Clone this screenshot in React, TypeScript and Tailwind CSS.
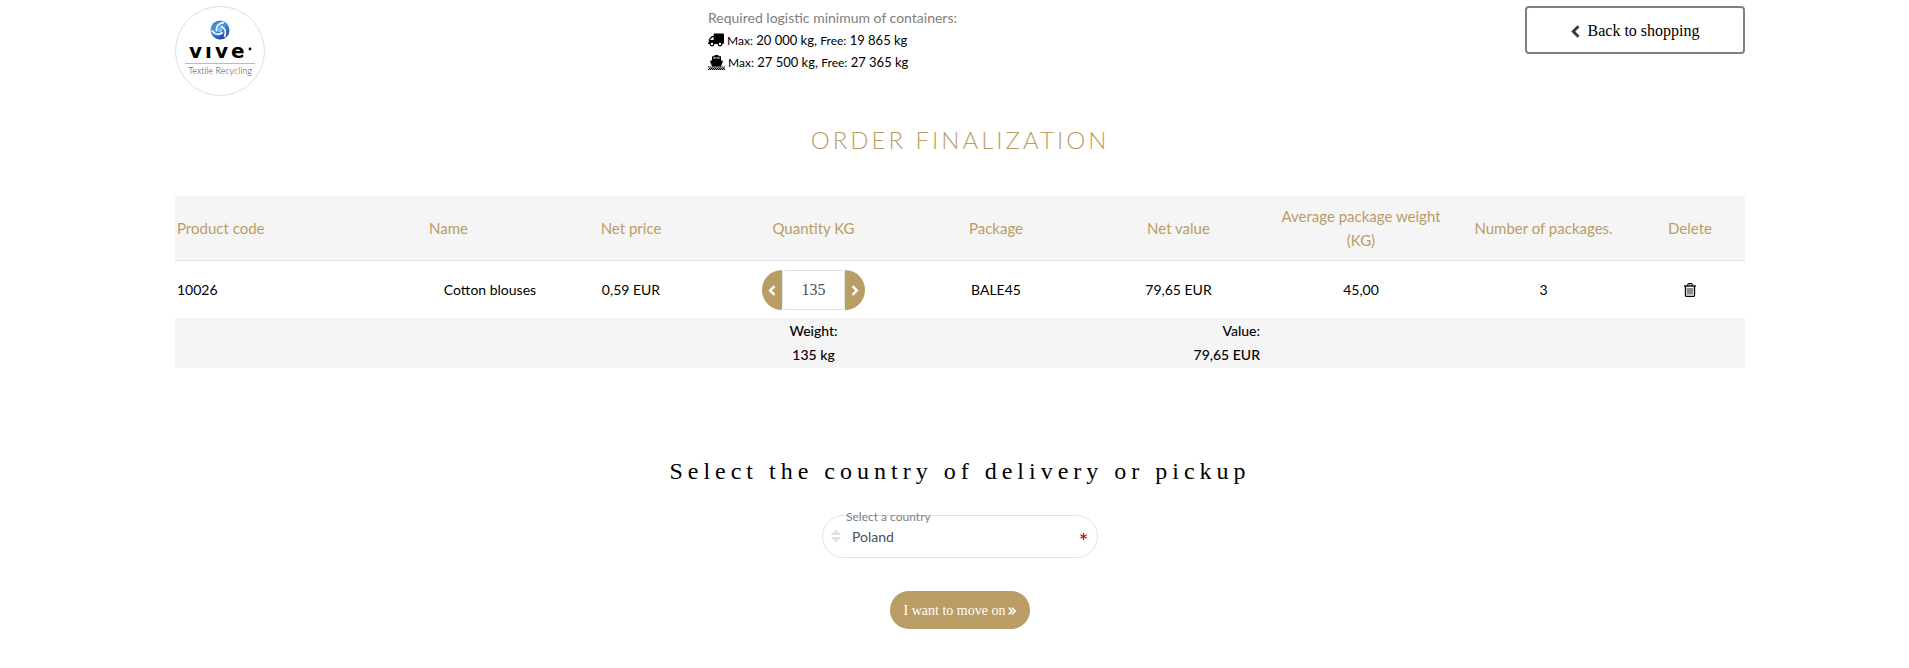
import { useState } from 'react'
import { FaTruck, FaSort, FaAsterisk } from 'react-icons/fa'

interface OrderItem {
  code: string;
  name: string;
  price: string;
  quantity: number;
  packageType: string;
  value: string;
  averageWeight: string;
  packages: number;
}

const items: OrderItem[] = [
  {
    code: '10026',
    name: 'Cotton blouses',
    price: '0,59 EUR',
    quantity: 135,
    packageType: 'BALE45',
    value: '79,65 EUR',
    averageWeight: '45,00',
    packages: 3,
  },
]

const countries = ['Poland', 'Germany', 'Czech Republic', 'Slovakia']

function Logo() {
  return (
    <svg viewBox="0 0 90 90" className="h-[90px] w-[90px]" role="img" aria-label="VIVE Textile Recycling">
      <defs>
        <linearGradient id="orb" x1="0" y1="0" x2="0.6" y2="1">
          <stop offset="0" stopColor="#3b78c4" />
          <stop offset="0.5" stopColor="#4b97e0" />
          <stop offset="1" stopColor="#1f3f9c" />
        </linearGradient>
      </defs>
      <circle cx="45" cy="45" r="44.5" fill="#fff" stroke="#ddd" />
      <circle cx="45" cy="24" r="9.5" fill="url(#orb)" />
      <g fill="none" stroke="#eef8ff" strokeWidth="1.9" strokeLinecap="round">
        <path d="M41.500 24.500C41 20.500 43.500 17.500 48 16.800" />
        <path d="M41.500 24.500C41 20.500 43.500 17.500 48 16.800" transform="rotate(120 45 24)" />
        <path d="M41.500 24.500C41 20.500 43.500 17.500 48 16.800" transform="rotate(240 45 24)" />
      </g>
      <circle cx="45" cy="24" r="2.4" fill="#7cc0f2" />
      <text x="14" y="52" fontSize="20" fontWeight="700" letterSpacing="3" className="font-['DejaVu_Sans']">vıve</text>
      <circle cx="75" cy="43" r="1.4" />
      <path d="M10 57.500h70" stroke="#bbb" />
      <text x="45" y="68" fontSize="9" textAnchor="middle" fill="#444" className="font-[Lato] font-light">Textile Recycling</text>
    </svg>
  )
}

function Chevron({ className }: { className: string }) {
  return (
    <svg viewBox="0 0 9 13" className={className} fill="none" stroke="currentColor" strokeWidth="2.900" aria-hidden="true">
      <path d="M7.500 1.300 2.300 6.500l5.200 5.200" />
    </svg>
  )
}

function DoubleAngle() {
  return (
    <svg viewBox="0 0 9 9" className="h-2 w-2" fill="none" stroke="currentColor" strokeWidth="1.700" aria-hidden="true">
      <path d="M.600.600l3.900 3.900-3.900 3.900M4.200.600l3.900 3.900-3.900 3.900" />
    </svg>
  )
}

function ShipIcon() {
  return (
    <svg viewBox="0 0 17 15" className="h-[15px] w-[17px]" fill="currentColor" aria-hidden="true">
      <path d="M6.500 0h4v1.200h2.500v4l2 .9-2 5.400H4l-2-5.400 2-.9v-4h2.500zM5.600 2.600v1.400l2.900-1 2.900 1V2.600z" fillRule="evenodd" />
      <path d="M0 12h17M1 13.300h16M0 14.500h17" fill="none" stroke="currentColor" strokeWidth="1.200" strokeDasharray="1.400 .600" />
    </svg>
  )
}

function TrashIcon() {
  return (
    <svg viewBox="0 0 12 14" className="h-[14px] w-[12px]" fill="none" stroke="currentColor" aria-hidden="true">
      <path d="M0 3h12" strokeWidth="1.4" />
      <path d="M3.500 2.500Q3.800.700 5 .700h2Q8.200.700 8.500 2.500" strokeWidth="1.2" />
      <path d="M1.500 3.500v9q0 .8.800.8h7.400q.8 0 .8-.8v-9" strokeWidth="1.3" />
      <path d="M4 5v6.500M6 5v6.500M8 5v6.500" strokeWidth="0.9" />
    </svg>
  )
}

export default function App() {
  const [quantity, setQuantity] = useState(items[0].quantity)
  const [country, setCountry] = useState('Poland')

  return (
    <div className="pl-[11px] font-[Lato,sans-serif] text-sm leading-6 text-black">
      <div className="mx-auto max-w-[1570px] pt-[6px]">
        <header className="flex items-start justify-between">
          <div className="flex">
            <a href="#" className="mr-[443px] block"><Logo /></a>
            <div className="text-[13px] leading-[22px]">
              <p className="text-sm leading-[23px] text-[#808080]">Required logistic minimum of containers:</p>
              <p className="flex items-center gap-[3px]">
                <FaTruck className="h-4 w-4 -scale-x-100" />
                <span><span className="text-xs">Max:</span> 20 000 kg, <span className="text-xs">Free:</span> 19 865 kg</span>
              </p>
              <p className="flex items-center gap-[3px]">
                <ShipIcon />
                <span><span className="text-xs">Max:</span> 27 500 kg, <span className="text-xs">Free:</span> 27 365 kg</span>
              </p>
            </div>
          </div>
          <button className="flex h-12 w-[220px] items-center justify-center gap-2 rounded border-2 border-[#808080] pt-[2px] font-['Liberation_Serif',serif] text-base">
            <Chevron className="h-[13px] w-[9px] text-[#343a40]" />
            Back to shopping
          </button>
        </header>

        <h1 className="mt-6 text-center text-2xl leading-10 font-light tracking-[3px] text-[#b99d65]">ORDER FINALIZATION</h1>

        {/* Order lines */}
        <table className="mt-9 w-full table-fixed text-center">
          <colgroup>
            <col className="w-[252px]" />
            <col className="w-[113px]" />
            <col className="w-[182px]" />
            <col className="w-[183px]" />
            <col className="w-[182px]" />
            <col className="w-[183px]" />
            <col className="w-[182px]" />
            <col className="w-[183px]" />
            <col className="w-[110px]" />
          </colgroup>
          <thead className="border-b border-[#dee2e6] bg-[#f5f5f5] text-[15px] text-[#b99d65]">
            <tr className="h-16">
              <th className="px-[2px] text-left font-normal">Product code</th>
              <th className="px-[2px] text-left font-normal">Name</th>
              <th className="px-[2px] font-normal">Net price</th>
              <th className="px-[2px] font-normal">Quantity KG</th>
              <th className="px-[2px] font-normal">Package</th>
              <th className="px-[2px] font-normal">Net value</th>
              <th className="px-[2px] font-normal">Average package weight<br />(KG)</th>
              <th className="px-[2px] font-normal">Number of packages.</th>
              <th className="px-[2px] font-normal">Delete</th>
            </tr>
          </thead>
          <tbody>
            {items.map((item) => (
              <tr key={item.code} className="h-[58px]">
                <td className="px-[2px] pt-[2px] text-left">{item.code}</td>
                <td className="pt-[2px] pr-[2px] pl-[15px]">{item.name}</td>
                <td className="px-[2px] pt-[2px]">{item.price}</td>
                <td className="px-[2px] pt-[2px]">
                  <div className="flex items-center justify-center">
                    <button
                      aria-label="Less"
                      onClick={() => setQuantity(quantity - 45)}
                      className="flex h-10 w-5 items-center justify-center rounded-l-full bg-[#b99d65] text-white"
                    >
                      <Chevron className="h-[11px] w-2" />
                    </button>
                    <input
                      aria-label="Quantity KG"
                      value={quantity}
                      onChange={(e) => setQuantity(Number(e.target.value))}
                      className="h-10 w-[63px] rounded-sm border border-[#dee2e6] text-center font-['Liberation_Serif',serif] text-base text-[#495057]"
                    />
                    <button
                      aria-label="More"
                      onClick={() => setQuantity(quantity + 45)}
                      className="flex h-10 w-5 items-center justify-center rounded-r-full bg-[#b99d65] text-white"
                    >
                      <Chevron className="h-[11px] w-2 rotate-180" />
                    </button>
                  </div>
                </td>
                <td className="px-[2px] pt-[2px]">{item.packageType}</td>
                <td className="px-[2px] pt-[2px]">{item.value}</td>
                <td className="px-[2px] pt-[2px]">{item.averageWeight}</td>
                <td className="px-[2px] pt-[2px]">{item.packages}</td>
                <td className="px-[2px]">
                  <button aria-label="Delete" className="inline-flex pb-[2px] align-middle"><TrashIcon /></button>
                </td>
              </tr>
            ))}
          </tbody>
          <tfoot className="bg-[#f5f5f5]">
            <tr className="h-[50px] font-medium">
              <td colSpan={3}></td>
              <td>Weight:<br />135 kg</td>
              <td></td>
              <td className="pr-[10px] text-right">Value:<br />79,65 EUR</td>
              <td colSpan={3}></td>
            </tr>
          </tfoot>
        </table>

        {/* Delivery country */}
        <form className="flex flex-col items-center" onSubmit={(e) => e.preventDefault()}>
          <h2 className="mt-[83px] font-['Liberation_Serif',serif] text-2xl leading-10 tracking-[5px]">
            Select the country of delivery or pickup
          </h2>
          <div className="relative mt-6 w-[276px]">
            <label htmlFor="country" className="absolute -top-[6px] left-6 text-xs leading-4 text-[#808080]">Select a country</label>
            <FaSort className="absolute top-[13px] left-2 h-4 w-3 text-[#dee2e6]" />
            <select
              id="country"
              value={country}
              onChange={(e) => setCountry(e.target.value)}
              className="h-[43px] w-full appearance-none rounded-full border border-[#dee2e6] bg-transparent pl-[29px] text-[#495057]"
            >
              {countries.map((c) => <option key={c}>{c}</option>)}
            </select>
            <FaAsterisk className="absolute top-[18px] right-[11px] h-[7px] w-[7px] text-[#dc0012]" />
          </div>
          <button className="mt-[33px] flex h-[38px] w-[140px] items-center justify-center gap-[3px] rounded-full bg-[#b99d65] pt-px font-['Liberation_Serif',serif] text-sm text-white">
            I want to move on
            <DoubleAngle />
          </button>
        </form>
      </div>
    </div>
  )
}
